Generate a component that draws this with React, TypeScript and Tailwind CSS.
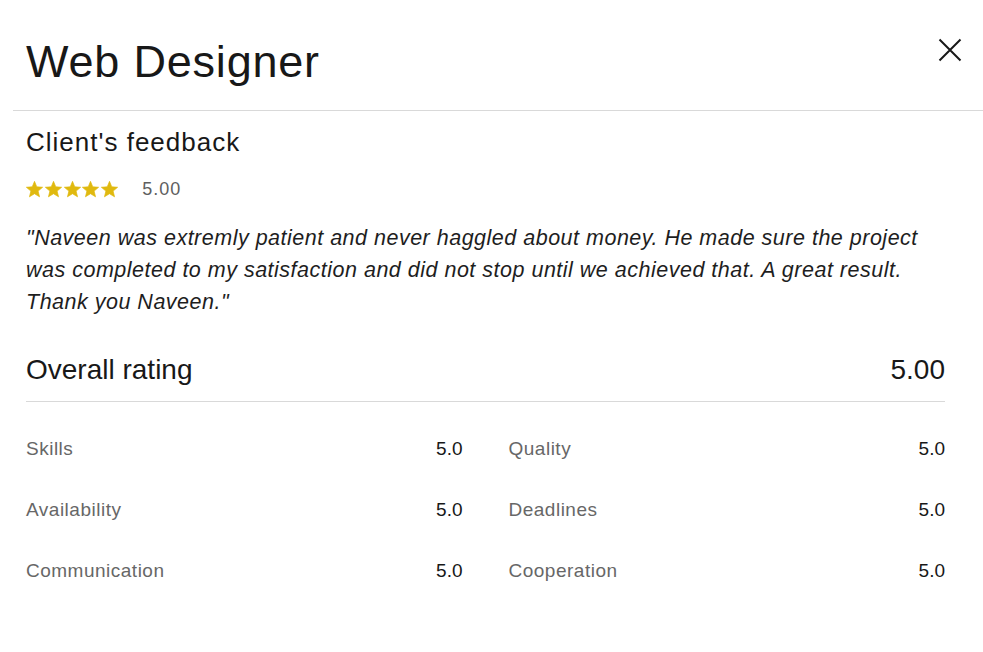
import React from "react";

const Star = () => (
  <svg width="17" height="17" viewBox="-0.5 -0.5 25 25" className="shrink-0">
    <path
      d="M12 0 L15.29 8.07 L23.98 8.71 L17.33 14.33 L19.41 22.79 L12 18.2 L4.59 22.79 L6.67 14.33 L0.02 8.71 L8.71 8.07Z"
      fill="#e0b90f"
      stroke="#e0b90f"
      strokeWidth="1"
      strokeLinejoin="round"
    />
  </svg>
);

const rows: [string, string, string, string][] = [
  ["Skills", "5.0", "Quality", "5.0"],
  ["Availability", "5.0", "Deadlines", "5.0"],
  ["Communication", "5.0", "Cooperation", "5.0"],
];

export default function App() {
  return (
    <div
      className="w-[983px] h-[652px] bg-white text-[#181818] overflow-hidden"
      style={{ fontFamily: '"Liberation Sans", Arial, sans-serif' }}
    >
      <div className="ml-[13px] pl-[13px] pr-[21px] pt-[38px] pb-[24px] border-b border-[#d9d9d9] flex items-start justify-between">
        <h1 className="text-[45px] leading-[48px] font-normal tracking-[0.8px]">Web Designer</h1>
        <button className="w-6 h-6 flex items-center justify-center">
          <svg width="24" height="24" viewBox="0 0 24 24" fill="none">
            <path d="M1.5 1.5l21 21M22.5 1.5l-21 21" stroke="#181818" strokeWidth="2" />
          </svg>
        </button>
      </div>

      <div className="pl-[26px] pr-[38px]">
        <h2 className="mt-[15px] text-[26px] leading-[32px] font-normal tracking-[1px]">Client's feedback</h2>

        <div className="mt-[19px] flex items-center h-6">
          <div className="flex items-center gap-[1.8px]">
            <Star />
            <Star />
            <Star />
            <Star />
            <Star />
          </div>
          <span className="ml-[24px] text-[18px] tracking-[1px] text-[#5e5e5e]">5.00</span>
        </div>

        <p className="mt-[21px] text-[21.5px] leading-[32px] italic tracking-[0.5px] text-[#1e1e1e]">
          "Naveen was extremly patient and never haggled about money. He made sure the project was completed to my
          satisfaction and did not stop until we achieved that. A great result. Thank you Naveen."
        </p>

        <div className="mt-[34px] pb-[13px] border-b border-[#d9d9d9] flex items-center justify-between">
          <span className="text-[28px] leading-[36px]">Overall rating</span>
          <span className="text-[28px] leading-[36px]">5.00</span>
        </div>

        <div className="mt-[35px] grid grid-cols-2 gap-x-[46px] gap-y-[37px]">
          {rows.map(([a, av, b, bv]) => (
            <React.Fragment key={a}>
              <div className="flex items-center justify-between text-[19px] leading-[24px]">
                <span className="text-[#676767] tracking-[0.5px]">{a}</span>
                <span className="text-[#181818]">{av}</span>
              </div>
              <div className="flex items-center justify-between text-[19px] leading-[24px]">
                <span className="text-[#676767] tracking-[0.5px]">{b}</span>
                <span className="text-[#181818]">{bv}</span>
              </div>
            </React.Fragment>
          ))}
        </div>
      </div>
    </div>
  );
}
